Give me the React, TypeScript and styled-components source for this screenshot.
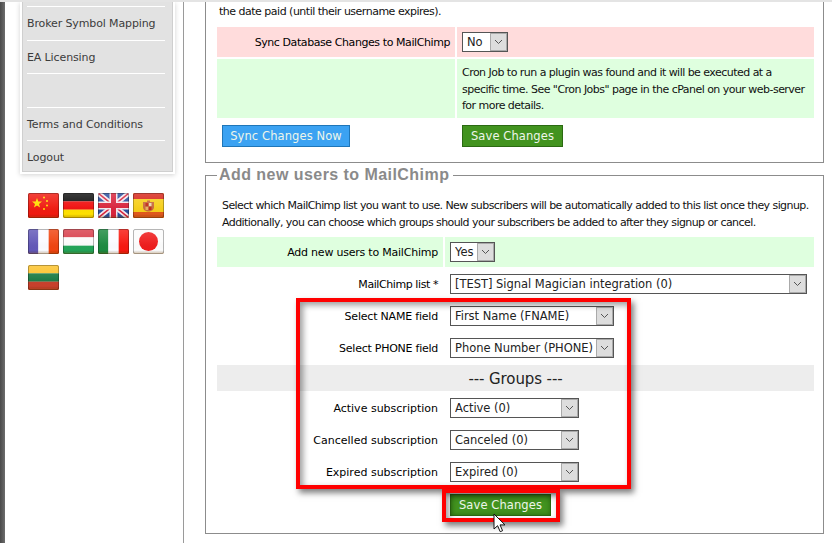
import React from "react";
import styled, { createGlobalStyle } from "styled-components";

const Global = createGlobalStyle`
  html, body { margin: 0; padding: 0; background: #fff; }
  body { width: 832px; height: 543px; overflow: hidden; font-family: "DejaVu Sans", sans-serif; }
  * { box-sizing: border-box; }
`;

const Page = styled.div`
  position: relative;
  display: flex;
  width: 832px;
  height: 543px;
  overflow: hidden;
  border-top: 2px solid #e4e4e4;
`;
const Strip = styled.div`
  flex: 0 0 5px;
  background: linear-gradient(90deg, #4a4a4a, #6d6d6d);
`;
const Sidebar = styled.aside`
  flex: 0 0 179px;
  border-right: 1px solid #9a9a9a;
  padding-left: 15px;
`;
const MenuPanel = styled.nav`
  width: 155px;
  height: 172px;
  padding: 0 2px 2px;
  background: #fff;
  box-shadow: 0 1px 5px rgba(0, 0, 0, 0.18);
`;
const MenuInner = styled.div`
  height: 100%;
  padding: 4px 7px 0 4px;
  background: #e2e2e2;
  border: 1px solid #cfcfcf;
  border-top: 0;
`;
const MenuItem = styled.div`
  height: 33.5px;
  border-top: 1px solid #fff;
  font: 11px/33px "DejaVu Sans", sans-serif;
  letter-spacing: -0.12px;
  color: #3c3c3c;
  white-space: nowrap;
`;
const Flags = styled.div`
  display: flex;
  flex-wrap: wrap;
  gap: 11px 4px;
  width: 140px;
  margin: 19px 0 0 8px;
`;
const Main = styled.main`
  flex: 1;
  min-width: 0;
  padding: 0 8px 0 21px;
`;
const TopBox = styled.section`
  height: 161px;
  border: 1px solid #8c8c8c;
  border-top: 0;
  padding: 1px 9px 0 11px;
`;
const Para = styled.p<{ $indent?: number; $track?: number }>`
  margin: 0 0 0 ${(p) => p.$indent ?? 2}px;
  font: 11px/17px "DejaVu Sans", sans-serif;
  letter-spacing: ${(p) => p.$track ?? -0.5}px;
  color: #111;
  white-space: nowrap;
`;
const Fieldset = styled.fieldset`
  margin: 3px 0 0;
  height: 368px;
  border: 1px solid #8c8c8c;
  padding: 13px 9px 0 11px;
  min-width: 0;
`;
const Legend = styled.legend`
  margin-left: 0;
  padding: 0 4px 0 2px;
  font: bold 16px/18px "Liberation Sans", sans-serif;
  letter-spacing: 0.45px;
  color: #8a8a8a;
  white-space: nowrap;
`;
const Rows = styled.div<{ $top: number }>`
  display: flex;
  flex-direction: column;
  gap: 2px;
  margin-top: ${(p) => p.$top}px;
`;
const Row = styled.div<{ $left: number; $tone?: string; $height?: number }>`
  display: grid;
  grid-template-columns: ${(p) => p.$left}px minmax(0, 1fr);
  gap: 2px;
  min-height: ${(p) => p.$height ?? 30}px;
  & > div { background: ${(p) => p.$tone ?? "transparent"}; }
`;
const Label = styled.div<{ $track?: number }>`
  display: flex;
  align-items: center;
  justify-content: flex-end;
  padding-right: 5px;
  font: 11px/1 "DejaVu Sans", sans-serif;
  letter-spacing: ${(p) => p.$track ?? -0.42}px;
  color: #000;
  white-space: nowrap;
`;
const Cell = styled.div`
  display: flex;
  align-items: center;
  padding-left: 5px;
`;
const Note = styled.div`
  padding: 6px 5px 0;
  font: 11px/16.6px "DejaVu Sans", sans-serif;
  letter-spacing: -0.53px;
  color: #111;
  white-space: nowrap;
`;
const SelectWrap = styled.span<{ $w: number }>`
  position: relative;
  display: block;
  width: ${(p) => p.$w}px;
  height: 20px;
`;
const NativeSelect = styled.select`
  appearance: none;
  display: block;
  width: 100%;
  height: 100%;
  padding: 0 0 0 4px;
  border: 1px solid #555;
  border-radius: 0;
  background: #fff;
  font: 11.5px "DejaVu Sans", sans-serif;
  letter-spacing: -0.03px;
  color: #222;
  outline: none;
`;
const Arrow = styled.span`
  position: absolute;
  top: 1px;
  right: 1px;
  bottom: 1px;
  width: 17px;
  display: flex;
  align-items: center;
  justify-content: center;
  background: #ddd;
  border: 1px solid #aaa;
  pointer-events: none;
`;
const Band = styled.div`
  display: flex;
  align-items: center;
  justify-content: center;
  height: 26px;
  padding-top: 2px;
  background: #ededed;
  font: 15px "DejaVu Sans", sans-serif;
  letter-spacing: -0.1px;
  color: #222;
`;
const ButtonRow = styled.div<{ $left: number; $top: number }>`
  display: flex;
  gap: ${(p) => p.$left}px;
  margin-top: ${(p) => p.$top}px;
  padding-left: 5px;
`;
const Spacer = styled.span<{ $w: number }>`
  width: ${(p) => p.$w}px;
`;
const Button = styled.button<{ $tone: "blue" | "green"; $w: number; $hover?: boolean }>`
  width: ${(p) => p.$w}px;
  height: 22px;
  padding: 0;
  border: 1px solid ${(p) => (p.$tone === "blue" ? "#1f76b8" : "#2b6a12")};
  background: ${(p) => (p.$tone === "blue" ? "#3ba2f2" : "#42931f")};
  box-shadow: ${(p) => (p.$hover ? "inset 0 0 5px #2a6a10" : "none")};
  color: #eef6ea;
  font: 11.5px "DejaVu Sans", sans-serif;
  letter-spacing: 0.1px;
`;
const Highlight = styled.div<{ $x: number; $y: number; $w: number; $h: number }>`
  position: absolute;
  left: ${(p) => p.$x}px;
  top: ${(p) => p.$y}px;
  width: ${(p) => p.$w}px;
  height: ${(p) => p.$h}px;
  border: 4px solid #f00;
  box-shadow: 3px 4px 6px rgba(0, 0, 0, 0.5), inset 3px 3px 6px rgba(0, 0, 0, 0.4);
  pointer-events: none;
`;
const Cursor = styled.svg`
  position: absolute;
  left: 493px;
  top: 511px;
`;

const Chevron = () => (
  <svg width="9" height="6" viewBox="0 0 9 6"><path d="M1 1l3.5 3.5L8 1" fill="none" stroke="#555" strokeWidth="1" /></svg>
);

const Select = ({ w, value }: { w: number; value: string }) => (
  <SelectWrap $w={w}>
    <NativeSelect defaultValue={value}><option>{value}</option></NativeSelect>
    <Arrow><Chevron /></Arrow>
  </SelectWrap>
);

const Bars = ({ dir, colors }: { dir: "h" | "v"; colors: string[] }) => (
  <>
    {colors.map((c, i) =>
      dir === "h" ? (
        <rect key={i} x="0" y={(i * 25) / colors.length} width="31" height={25 / colors.length + 0.1} fill={c} />
      ) : (
        <rect key={i} y="0" x={(i * 31) / colors.length} height="25" width={31 / colors.length + 0.1} fill={c} />
      )
    )}
  </>
);

const Flag = ({ id, children }: { id: string; children: React.ReactNode }) => (
  <svg width="31" height="25" viewBox="0 0 31 25">
    <defs>
      <clipPath id={`c${id}`}><rect width="31" height="25" rx="1.5" /></clipPath>
      <linearGradient id={`g${id}`} x1="0" y1="0" x2="0" y2="1">
        <stop offset="0" stopColor="#fff" stopOpacity="0.18" />
        <stop offset="0.5" stopColor="#fff" stopOpacity="0.05" />
        <stop offset="0.85" stopColor="#000" stopOpacity="0" />
        <stop offset="1" stopColor="#c87000" stopOpacity="0.35" />
      </linearGradient>
    </defs>
    <g clipPath={`url(#c${id})`}>
      {children}
      <rect width="31" height="25" fill={`url(#g${id})`} />
    </g>
    <rect x="0.5" y="0.5" width="30" height="24" rx="1.5" fill="none" stroke="#000" strokeOpacity="0.28" />
  </svg>
);

const star = "M9 5l1.3 3.6h3.7l-3 2.3 1.1 3.7L9 12.4l-3.1 2.2L7 10.9 4 8.6h3.7z";

const flagSet: [string, React.ReactNode][] = [
  ["cn", <><rect width="31" height="25" fill="#f01a10" /><path d={star} fill="#ffe000" /><g fill="#ffe000"><circle cx="16" cy="4.5" r="1" /><circle cx="19" cy="8" r="1" /><circle cx="19" cy="12.5" r="1" /><circle cx="16" cy="16" r="1" /></g></>],
  ["de", <Bars dir="h" colors={["#111", "#f01010", "#ffe000"]} />],
  ["gb", <><rect width="31" height="25" fill="#2a4f9e" /><path d="M0 0L31 25M31 0L0 25" stroke="#f4e8ee" strokeWidth="5" /><path d="M0 0L31 25M31 0L0 25" stroke="#d8243c" strokeWidth="1.5" /><path d="M15.5 0V25M0 12.5H31" stroke="#f4e8ee" strokeWidth="8" /><path d="M15.5 0V25M0 12.5H31" stroke="#d8243c" strokeWidth="5" /></>],
  ["es", <><rect width="31" height="25" fill="#f6cf1a" /><rect width="31" height="6" fill="#d8281c" /><rect y="19" width="31" height="6" fill="#e0591c" /><path d="M10 9h4v-1.5h3V9h4v5c0 3-3 4.500-5.500 4.500S10 17 10 14z" fill="#c8683c" /><rect x="12.500" y="10" width="2.500" height="3" fill="#c02818" /><rect x="16" y="10" width="2.500" height="3" fill="#e8d8b0" /><rect x="12.500" y="14" width="2.500" height="3" fill="#e8b060" /><rect x="16" y="14" width="2.500" height="3" fill="#c02818" /></>],
  ["fr", <Bars dir="v" colors={["#6258b8", "#fbfbff", "#f04410"]} />],
  ["hu", <Bars dir="h" colors={["#d8404c", "#fbfbfb", "#22a458"]} />],
  ["it", <Bars dir="v" colors={["#1c8a40", "#fbfbff", "#f81810"]} />],
  ["jp", <><rect width="31" height="25" fill="#fcfcfc" /><circle cx="15.5" cy="12.5" r="9.5" fill="#ee1c1c" /></>],
  ["lt", <Bars dir="h" colors={["#fcc22a", "#197a44", "#c8402c"]} />],
];

export default function App() {
  return (
    <Page>
      <Global />
      <Strip />
      <Sidebar>
        <MenuPanel>
          <MenuInner>
            <MenuItem>Broker Symbol Mapping</MenuItem>
            <MenuItem>EA Licensing</MenuItem>
            <MenuItem />
            <MenuItem>Terms and Conditions</MenuItem>
            <MenuItem>Logout</MenuItem>
          </MenuInner>
        </MenuPanel>
        <Flags>
          {flagSet.map(([id, node]) => <Flag key={id} id={id}>{node}</Flag>)}
        </Flags>
      </Sidebar>
      <Main>
        <TopBox>
          <Para $indent={2}>the date paid (until their username expires).</Para>
          <Rows $top={7}>
            <Row $left={238} $tone="#ffdcdc">
              <Label>Sync Database Changes to MailChimp</Label>
              <Cell><Select w={46} value="No" /></Cell>
            </Row>
            <Row $left={238} $tone="#dfffdf" $height={59}>
              <div />
              <Note>Cron Job to run a plugin was found and it will be executed at a<br />specific time. See "Cron Jobs" page in the cPanel on your web-server<br />for more details.</Note>
            </Row>
          </Rows>
          <ButtonRow $left={112} $top={7}>
            <Button $tone="blue" $w={128}>Sync Changes Now</Button>
            <Button $tone="green" $w={101}>Save Changes</Button>
          </ButtonRow>
        </TopBox>
        <Fieldset>
          <Legend>Add new users to MailChimp</Legend>
          <Para $indent={5} $track={-0.57}>Select which MailChimp list you want to use. New subscribers will be automatically added to this list once they signup.</Para>
          <Para $indent={5} $track={-0.57}>Additionally, you can choose which groups should your subscribers be added to after they signup or cancel.</Para>
          <Rows $top={6}>
            <Row $left={226} $tone="#dfffdf">
              <Label $track={-0.22}>Add new users to MailChimp</Label>
              <Cell><Select w={45} value="Yes" /></Cell>
            </Row>
            <Row $left={226}>
              <Label>MailChimp list *</Label>
              <Cell><Select w={357} value="[TEST] Signal Magician integration (0)" /></Cell>
            </Row>
            <Row $left={226}>
              <Label $track={-0.2}>Select NAME field</Label>
              <Cell><Select w={164} value="First Name (FNAME)" /></Cell>
            </Row>
            <Row $left={226}>
              <Label $track={-0.25}>Select PHONE field</Label>
              <Cell><Select w={164} value="Phone Number (PHONE)" /></Cell>
            </Row>
            <Band>--- Groups ---</Band>
            <Row $left={226}>
              <Label $track={0}>Active subscription</Label>
              <Cell><Select w={129} value="Active (0)" /></Cell>
            </Row>
            <Row $left={226}>
              <Label $track={0}>Cancelled subscription</Label>
              <Cell><Select w={129} value="Canceled (0)" /></Cell>
            </Row>
            <Row $left={226}>
              <Label $track={0}>Expired subscription</Label>
              <Cell><Select w={129} value="Expired (0)" /></Cell>
            </Row>
          </Rows>
          <ButtonRow $left={0} $top={7}>
            <Spacer $w={228} />
            <Button $tone="green" $w={101} $hover>Save Changes</Button>
          </ButtonRow>
        </Fieldset>
      </Main>
      <Highlight $x={296} $y={296} $w={335} $h={191} />
      <Highlight $x={442} $y={487} $w={118} $h={33} />
      <Cursor width="14" height="20" viewBox="0 0 14 20">
        <path d="M1 1v15l3.6-3.3 2.6 6 2.4-1-2.6-5.8H12z" fill="#fff" stroke="#111" strokeWidth="1" />
      </Cursor>
    </Page>
  );
}
